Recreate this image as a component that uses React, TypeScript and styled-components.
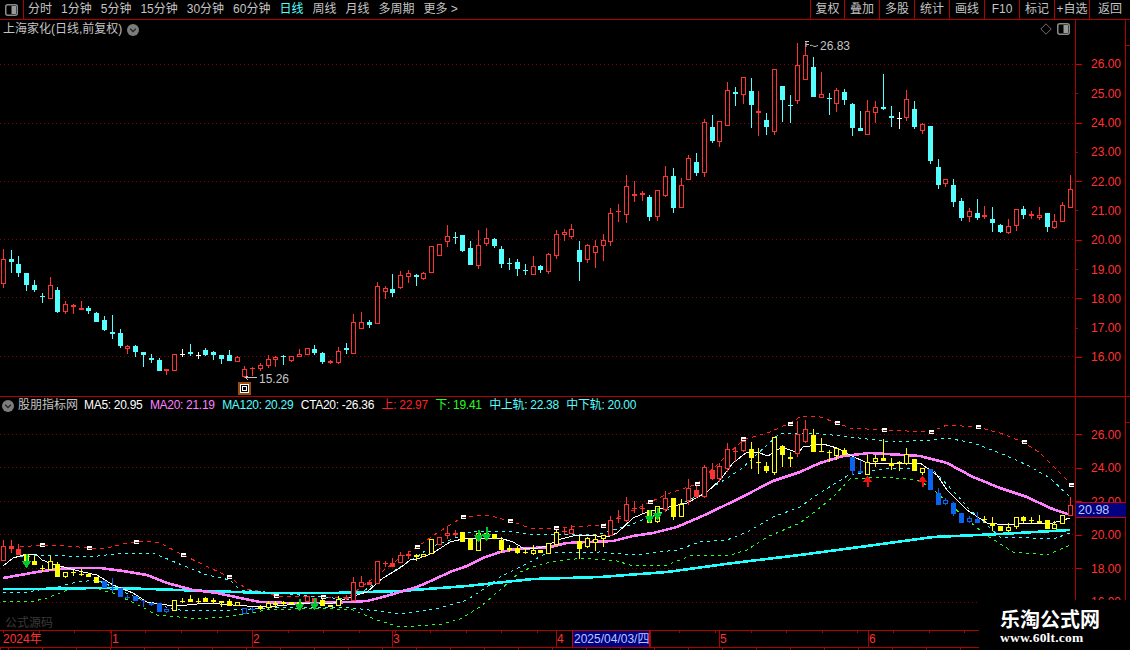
import React from "react";
import styled, { createGlobalStyle } from "styled-components";

const UI_FONT = '"Liberation Sans", "Noto Sans CJK SC", sans-serif';
const LINE = "#b00000";
const RED = "#ff3232";
const CYAN = "#54ffff";
const GREY = "#c4c4c4";

const Global = createGlobalStyle`
  html, body { margin: 0; padding: 0; background: #000; }
  body { font-family: ${UI_FONT}; font-size: 12px; color: ${GREY}; }
`;

const Screen = styled.div`
  position: relative;
  width: 1130px;
  height: 650px;
  overflow: hidden;
  background: #000;
  display: flex;
  flex-direction: column;
`;

/* ---------- toolbar ---------- */
const Toolbar = styled.div`
  height: 19px;
  flex: none;
  display: flex;
  align-items: stretch;
  border-bottom: 1px solid ${LINE};
`;
const IconCell = styled.div`
  width: 23px;
  flex: none;
  display: flex;
  align-items: center;
  justify-content: center;
  border-right: 1px solid ${LINE};
`;
const PeriodList = styled.div`
  display: flex;
  align-items: center;
  gap: 9px;
  padding-left: 4px;
`;
const Period = styled.span<{ $on?: boolean }>`
  color: ${(p) => (p.$on ? CYAN : GREY)};
  white-space: nowrap;
  line-height: 19px;
`;
const ActionList = styled.div`
  margin-left: auto;
  display: flex;
`;
const Action = styled.div<{ $w: number }>`
  width: ${(p) => p.$w}px;
  box-sizing: border-box;
  border-left: 1px solid ${LINE};
  text-align: center;
  line-height: 19px;
  white-space: nowrap;
  color: ${GREY};
`;

/* ---------- panes ---------- */
const Pane = styled.div<{ $h: number }>`
  position: relative;
  height: ${(p) => p.$h}px;
  flex: none;
  display: flex;
  border-bottom: 1px solid ${LINE};
`;
const Plot = styled.svg`
  display: block;
  flex: none;
  width: 1075px;
  height: 100%;
`;
const Scale = styled.div<{ $top: number }>`
  width: 51px;
  flex: none;
  box-sizing: border-box;
  border-left: 1px solid ${LINE};
  border-right: 1px solid ${LINE};
  padding-top: ${(p) => p.$top}px;
  overflow: hidden;
`;
const ScaleRow = styled.div<{ $h: number; $short?: boolean }>`
  height: ${(p) => p.$h}px;
  display: flex;
  align-items: center;
  color: ${RED};
  &::before {
    content: "";
    display: block;
    flex: none;
    width: ${(p) => (p.$short ? 2 : 6)}px;
    margin-right: ${(p) => (p.$short ? 13 : 9)}px;
    height: 1px;
    background: ${(p) => (p.$short ? LINE : "#d00000")};
  }
`;
const ScaleStub = styled.div`
  flex: 1;
  border-top: 1px solid ${LINE};
  margin-top: 25px;
  height: 0;
`;

const StockTitle = styled.div`
  position: absolute;
  left: 3px;
  top: 2px;
  display: flex;
  align-items: center;
  gap: 5px;
  line-height: 15px;
  white-space: nowrap;
`;
const CornerTools = styled.div`
  position: absolute;
  left: 1040px;
  top: 3px;
  display: flex;
  align-items: center;
  gap: 5px;
`;
const Legend = styled.div`
  position: absolute;
  left: 2px;
  top: 1px;
  display: flex;
  align-items: center;
  line-height: 15px;
  white-space: nowrap;
`;
const LegendName = styled.span`
  margin: 0 6px 0 4px;
  color: ${GREY};
`;
const LegendItem = styled.span<{ $c: string }>`
  color: ${(p) => p.$c};
  margin-right: 7.5px;
  letter-spacing: -0.3px;
`;
const LastPrice = styled.div`
  position: absolute;
  left: 1076px;
  top: 105px;
  width: 50px;
  height: 16px;
  box-sizing: border-box;
  background: #000080;
  border-top: 1px solid #d00000;
  border-bottom: 1px solid #d00000;
  padding-left: 2px;
  color: #b8c8ff;
  font-size: 12.5px;
  line-height: 14px;
`;
const DimMark = styled.div`
  position: absolute;
  left: 5px;
  bottom: -1px;
  color: #3a3a3a;
  line-height: 15px;
`;

/* ---------- time axis ---------- */
const TimeAxis = styled.div`
  height: 16px;
  flex: none;
  display: flex;
  background: repeating-linear-gradient(90deg, ${LINE} 0 1px, transparent 1px 35.6px) 3px 0 / 100% 2px no-repeat;
`;
const TimeCell = styled.div<{ $w: number }>`
  width: ${(p) => p.$w}px;
  flex: none;
  box-sizing: border-box;
  border-left: 1px solid ${LINE};
  padding-left: 0;
  color: ${RED};
  line-height: 16px;
  white-space: nowrap;
  &:first-child { border-left: 0; padding-left: 3px; }
`;
const TimeCursor = styled.div`
  width: 78px;
  flex: none;
  box-sizing: border-box;
  border-left: 1px solid #d00000;
  border-right: 1px solid #d00000;
  background: #000080;
  color: #b8c8ff;
  line-height: 16px;
  white-space: nowrap;
  padding-left: 1px;
`;
const TickStrip = styled.div`
  flex: 1;
  border-top: 1px solid ${LINE};
  background: repeating-linear-gradient(90deg, ${LINE} 0 1px, transparent 1px 34px) 8px 0;
`;

/* ---------- watermark ---------- */
const Watermark = styled.div`
  position: absolute;
  left: 979px;
  top: 600px;
  width: 151px;
  height: 50px;
  background: #000;
  display: flex;
  flex-direction: column;
  padding: 8px 0 0 21px;
  box-sizing: border-box;
  color: #fff;
`;
const WatermarkTitle = styled.div`
  font-family: "Noto Sans CJK SC", "Liberation Serif", serif;
  font-weight: 700;
  font-size: 20px;
  line-height: 22px;
  white-space: nowrap;
`;
const WatermarkUrl = styled.div`
  font-family: "Liberation Serif", serif;
  font-weight: 700;
  font-size: 13.5px;
  line-height: 16px;
  letter-spacing: 0.2px;
  white-space: nowrap;
`;

/* ---------- chart text ---------- */
const Note = styled.text`
  font-family: ${UI_FONT};
  font-size: 12px;
  fill: ${GREY};
`;

/* ---------- data ---------- */
type Row = [number, number, number, number, string];
type Candle = { i: number; wt: number; bt: number; bb: number; wb: number; k: string };

const from = (start: number, off: number, rows: Row[]): Candle[] =>
  rows.map((r, n) => ({
    i: start + n,
    wt: off + r[0] / 3,
    bt: off + r[1] / 3,
    bb: off + r[2] / 3,
    wb: off + r[3] / 3,
    k: r[4],
  }));

const main: Candle[] = [
  ...from(0, 240, [
    [27,57,131,144,"R"],[30,57,66,99,"c"],[48,72,99,111,"c"],[99,99,135,152,"c"],[121,135,150,156,"c"],
    [159,169,171,189,"c"],[111,136,176,177,"R"],[141,150,216,219,"c"],[183,192,216,222,"R"],[192,194,201,222,"R"],
    [183,205,209,209,"r"],[198,204,213,222,"c"],[216,219,246,246,"c"],[228,240,270,273,"c"],[225,277,282,297,"c"],
    [267,279,318,324,"c"],[315,318,327,342,"R"],[315,318,336,351,"c"],[336,336,345,381,"c"],[342,354,359,369,"c"],
    [354,360,393,393,"c"],[387,388,394,405,"R"],[343,343,392,392,"R"],[327,342,345,351,"w"],[312,336,342,348,"c"],
    [336,346,348,357,"w"],[324,330,345,348,"c"],[333,336,345,360,"c"],[345,345,357,372,"c"],[330,345,363,363,"c"],
    [348,351,365,365,"R"],[378,388,411,414,"R"],[381,384,386,408,"r"],[369,375,387,393,"R"],[345,357,378,384,"R"],
    [348,351,359,381,"R"],[345,348,352,375,"c"],[348,349,363,366,"R"],[327,342,350,350,"R"],[324,324,345,345,"R"],
    [315,327,339,345,"c"],[336,339,366,372,"c"],[360,363,369,372,"r"],[321,333,369,372,"R"],[309,324,330,342,"c"],
  ]),
  ...from(45, 170, [
    [432,456,552,552,"R"],[426,457,477,477,"R"],[450,456,465,474,"c"],[336,348,461,461,"R"],[348,355,365,387,"R"],
    [312,357,369,381,"c"],[304,316,355,358,"R"],[300,310,320,339,"R"],[312,315,321,348,"c"],[306,309,327,330,"R"],
    [229,229,309,309,"R"],[223,223,257,258,"R"],[165,198,216,231,"R"],[186,201,204,222,"c"],[195,195,243,246,"c"],
    [213,234,285,285,"c"],[180,225,288,297,"R"],[174,204,222,228,"R"],[204,207,228,234,"c"],[228,237,282,294,"c"],
    [264,279,282,300,"c"],[267,276,297,318,"c"],[282,300,302,315,"c"],[258,288,315,315,"R"],[285,288,300,309,"c"],
    [249,252,306,312,"R"],[180,192,258,267,"R"],[177,186,195,213,"R"],[162,177,201,207,"R"],[213,240,276,333,"c"],
    [222,225,270,279,"R"],[210,228,249,294,"R"],[192,210,228,273,"R"],[114,129,216,228,"R"],[102,124,126,156,"r"],
    [15,48,135,159,"R"],[33,72,78,96,"r"],[63,69,75,93,"r"],[75,81,141,153,"c"],[60,60,141,153,"R"],
    [-12,18,78,81,"R"],[-6,18,114,129,"c"],[25,45,114,114,"R"],[-45,-36,30,30,"R"],
  ]),
  ...from(89, 30, [
    [369,396,429,438,"c"],[267,276,429,441,"R"],[255,291,333,339,"c"],[273,274,335,351,"R"],[156,181,287,287,"R"],
    [171,186,191,228,"c"],[141,142,196,222,"R"],[144,183,225,294,"c"],[183,244,250,318,"R"],[249,270,291,315,"c"],
    [118,118,305,315,"R"],[168,168,210,276,"c"],[195,225,228,279,"c"],[39,105,213,222,"R"],[39,75,150,150,"R"],
    [81,111,201,201,"c"],[126,193,203,203,"R"],[189,204,207,255,"c"],[174,181,221,246,"R"],[177,186,210,225,"c"],
    [220,222,294,318,"c"],[243,294,303,303,"c"],[210,243,315,315,"R"],[213,232,248,279,"R"],[132,231,237,240,"c"],
    [228,258,264,291,"c"],[246,264,267,297,"w"],[180,207,264,273,"R"],[213,237,291,297,"c"],[279,283,302,312,"R"],
    [288,288,393,402,"c"],[387,411,465,477,"c"],[447,448,462,471,"R"],[447,465,516,531,"c"],[504,513,564,573,"c"],
    [534,543,561,576,"R"],[507,549,564,570,"c"],[528,555,561,567,"r"],[531,567,579,606,"c"],[582,585,606,609,"c"],
    [567,588,609,612,"R"],[537,537,588,603,"R"],[528,537,555,567,"c"],[543,552,557,567,"r"],[531,555,564,570,"R"],
    [549,549,591,606,"c"],[552,573,594,597,"R"],[516,525,576,576,"R"],[435,477,534,534,"R"],
  ]),
];

const ind: Candle[] = [
  ...from(0, 530, [
    [30,48,92,92,"R"],[30,48,56,70,"r"],[42,57,75,75,"r"],[72,72,100,100,"y"],[78,93,105,105,"y"],
    [105,113,115,125,"y"],[78,93,119,120,"Y"],[97,102,141,141,"y"],[125,127,140,145,"Y"],[120,126,129,138,"y"],
    [118,131,136,138,"y"],[128,132,140,140,"y"],[140,140,158,158,"y"],[152,152,174,174,"b"],[145,173,176,185,"b"],
    [175,175,201,201,"b"],[196,200,203,208,"b"],[197,197,213,213,"b"],[210,210,213,232,"b"],[215,220,224,228,"b"],
    [220,220,245,245,"b"],[238,238,245,248,"B"],[210,210,242,242,"Y"],[205,212,215,220,"y"],[196,208,215,216,"y"],
    [205,212,215,222,"y"],[200,204,215,216,"y"],[205,211,215,222,"y"],[212,214,220,232,"y"],[208,214,228,228,"y"],
    [216,216,227,227,"Y"],[235,235,252,252,"B"],[232,236,239,250,"b"],[225,232,238,240,"Y"],[212,220,233,236,"Y"],
    [213,220,224,233,"y"],[214,217,221,228,"y"],[216,216,222,222,"Y"],[208,215,225,225,"y"],[199,199,215,215,"R"],
    [205,205,215,215,"r"],[195,210,228,228,"y"],[224,225,231,232,"y"],[198,208,227,228,"Y"],[195,202,208,210,"r"],
    [142,157,212,212,"R"],[138,156,171,172,"R"],[155,155,165,165,"r"],[93,93,161,161,"R"],[93,100,103,110,"r"],
    [85,100,110,110,"r"],
  ]),
  ...from(51, 500, [
    [157,165,190,190,"R"],[152,163,167,178,"r"],[162,165,172,182,"y"],[162,162,172,172,"Y"],[118,118,161,161,"Y"],
    [110,110,136,136,"R"],[78,100,107,116,"R"],[90,100,105,110,"r"],[96,96,125,125,"y"],[118,118,150,150,"y"],
    [90,100,152,152,"Y"],[82,100,118,122,"y"],[102,102,117,117,"y"],[112,120,150,160,"y"],[135,145,150,155,"y"],
    [138,145,160,163,"y"],[145,155,157,163,"y"],[135,150,163,165,"Y"],[150,150,160,160,"y"],[130,130,161,161,"Y"],
    [82,95,135,135,"Y"],[84,92,95,106,"r"],[75,88,101,101,"R"],[108,123,147,177,"y"],[110,115,140,143,"Y"],
    [102,118,128,152,"Y"],[105,105,116,140,"Y"],[48,60,107,108,"R"],[30,53,55,70,"r"],
  ]),
  ...from(80, 410, [
    [262,282,332,335,"R"],[274,295,298,310,"r"],[283,295,298,310,"r"],[300,300,340,340,"y"],[289,289,335,340,"Y"],
    [244,265,300,305,"R"],[265,265,320,330,"y"],[268,283,320,320,"Y"],[207,235,272,285,"R"],[218,241,262,265,"r"],
    [165,172,260,265,"R"],[160,180,207,210,"r"],[160,168,207,215,"R"],[100,118,178,185,"R"],[112,123,126,155,"r"],
    [80,93,124,125,"R"],[95,118,143,178,"y"],[114,155,158,193,"y"],[157,168,183,190,"y"],[80,82,189,195,"Y"],
    [105,108,135,170,"y"],[127,142,146,172,"y"],[33,72,133,140,"R"],[30,58,97,100,"R"],[58,75,127,127,"y"],
    [85,124,127,127,"y"],[120,126,129,157,"y"],[115,115,139,150,"Y"],[113,120,135,135,"y"],
  ]),
  ...from(109, 400, [
    [170,170,213,225,"b"],[180,213,218,218,"b"],[165,185,224,224,"Y"],[165,175,187,200,"Y"],[116,175,183,183,"y"],
    [175,190,197,210,"y"],[183,187,190,213,"y"],[145,163,193,195,"Y"],[178,178,213,213,"y"],[205,205,218,225,"Y"],
    [207,207,270,270,"b"],[265,280,315,316,"b"],[295,300,312,316,"B"],[305,310,342,348,"b"],[338,338,368,370,"b"],
    [348,355,365,370,"B"],[335,357,368,370,"b"],[348,358,361,368,"y"],[350,370,377,392,"y"],[378,378,392,392,"y"],
    [370,382,392,396,"Y"],[350,352,382,388,"Y"],[348,352,362,368,"y"],[352,360,363,372,"y"],[345,364,368,368,"y"],
    [360,360,386,386,"y"],[362,372,386,386,"Y"],[346,346,373,373,"Y"],[290,316,349,349,"R"],
  ]),
];

const COLORS: Record<string, string> = { r: RED, c: CYAN, w: "#ffffff", y: "#ffff00", b: "#0a64f0" };

const colX = (i: number) => Math.floor(3.3 + 7.79 * i);

const Candles = ({ data }: { data: Candle[] }) => (
  <g shapeRendering="crispEdges">
    {data.map((d) => {
      const x = colX(d.i);
      const color = COLORS[d.k.toLowerCase()];
      const top = Math.round(d.bt);
      const bot = Math.round(d.bb);
      const hollow = d.k !== d.k.toLowerCase() && bot - top >= 3;
      return (
        <g key={d.i}>
          <line x1={x + 0.5} x2={x + 0.5} y1={Math.round(d.wt)} y2={Math.round(d.wb)} stroke={color} />
          {hollow ? (
            <rect x={x - 1.5} y={top + 0.5} width={4} height={bot - top - 1} fill="#000" stroke={color} />
          ) : (
            <rect x={x - 2} y={top} width={5} height={Math.max(bot - top, 1)} fill={color} />
          )}
        </g>
      );
    })}
  </g>
);

const DottedGrid = ({ ys }: { ys: number[] }) => (
  <g>
    {ys.map((y) => (
      <line key={y} x1={0} x2={1075} y1={y + 0.5} y2={y + 0.5} stroke="#8c0000" strokeDasharray="1 3" shapeRendering="crispEdges" />
    ))}
  </g>
);

type Pt = [number, number];
const pts = (p: Pt[]) => p.map((q) => q.join(",")).join(" ");

const WHITE_LINE: Pt[] = [[3,566],[13,558],[27,554],[37,555],[42,560],[50,563],[67,568],[83,572],[97,575],[113,585],[133,593],[147,602],[167,605],[187,605],[207,603],[233,605],[247,606],[267,607],[287,605],[300,604],[333,603],[360,594],[367,592],[383,578],[400,568],[410,560],[417,559],[433,553],[450,542],[467,538],[500,538],[513,542],[523,548],[533,549],[547,546],[557,540],[573,536],[587,535],[607,537],[617,533],[633,518],[647,512],[687,503],[707,492],[720,480],[733,463],[747,452],[757,452],[768,456],[782,447],[798,453],[803,447],[823,444],[837,448],[850,455],[867,463],[900,463],[920,463],[937,475],[947,490],[967,510],[987,523],[1007,525],[1027,523],[1053,523],[1070,518]];
const PINK_LINE: Pt[] = [[3,578],[20,575],[37,572],[57,569],[77,568],[100,568],[123,571],[147,575],[167,583],[193,590],[217,593],[240,598],[260,602],[287,603],[317,603],[350,602],[367,601],[383,597],[400,592],[417,587],[433,580],[450,572],[467,566],[483,558],[500,552],[517,549],[533,548],[550,547],[567,543],[587,542],[613,541],[633,536],[653,533],[677,527],[707,514],[740,498],[773,481],[800,472],[820,463],[843,456],[870,453],[920,456],[947,463],[973,477],[1000,488],[1027,497],[1050,508],[1070,515]];
const TEAL_LINE: Pt[] = [[3,589],[33,589],[100,588],[150,589],[207,591],[267,593],[333,593],[400,591],[467,586],[533,579],[600,577],[667,572],[733,563],[800,555],[867,546],[933,537],[1000,534],[1070,530]];
const RED_BAND: Pt[] = [[20,547],[43,545],[67,546],[90,548],[107,548],[123,544],[143,541],[160,543],[183,555],[200,563],[227,576],[247,589],[263,592],[277,596],[323,597],[347,598],[400,558],[417,547],[437,533],[463,517],[487,515],[510,521],[533,529],[557,528],[603,525],[650,502],[670,493],[697,484],[743,440],[770,432],[790,423],[800,417],[817,416],[837,423],[850,428],[883,430],[930,432],[947,425],[977,427],[1000,433],[1023,442],[1040,453],[1057,470],[1070,483]];
const CYAN_UP: Pt[] = [[20,557],[43,555],[90,557],[123,553],[153,553],[177,563],[207,575],[230,580],[240,590],[277,593],[333,598],[350,600],[400,567],[417,557],[430,547],[450,540],[473,531],[513,532],[530,534],[600,534],[630,525],[667,510],[700,495],[740,470],[780,433],[813,433],[850,437],[893,442],[933,440],[947,438],[973,443],[1000,453],[1027,465],[1050,478],[1070,497]];
const CYAN_DOWN: Pt[] = [[3,593],[27,592],[57,587],[77,582],[97,580],[113,587],[137,598],[157,605],[180,610],[233,610],[267,608],[317,607],[353,608],[400,614],[440,608],[467,600],[487,587],[500,577],[530,562],[547,553],[600,552],[633,555],[677,550],[700,542],[727,540],[747,532],[773,517],[800,507],[817,495],[847,476],[887,468],[933,470],[957,495],[970,510],[987,525],[1000,537],[1033,538],[1053,539],[1070,533]];
const GREEN_BAND: Pt[] = [[3,601],[30,602],[47,598],[73,588],[97,589],[113,593],[140,606],[157,615],[200,619],[233,616],[267,610],[317,608],[353,610],[377,620],[400,627],[443,624],[460,619],[480,607],[500,590],[520,572],[530,568],[550,562],[583,558],[617,561],[633,566],[667,565],[693,555],[727,556],[747,550],[767,537],[800,523],[817,510],[833,497],[850,479],[883,477],[917,480],[930,487],[983,533],[1013,552],[1047,555],[1070,545]];

const MARKERS: Pt[] = [[42,545],[89,548],[136,542],[183,555],[229,577],[276,596],[323,597],[417,547],[463,517],[510,521],[556,528],[603,526],[650,502],[697,484],[743,439],[790,424],[837,423],[884,430],[931,432],[978,427],[1024,442],[1071,485]];

const DOWN_ARROWS: [number, number, number][] = [[3,554,568],[38,599,611],[40,598,610],[61,530,542],[62,527,541],[83,510,523],[84,508,520]];
const UP_ARROWS: [number, number, number][] = [[111,476,487],[118,476,487]];

const StockPlot = () => (
  <Plot viewBox="0 20 1075 376" preserveAspectRatio="none">
    <DottedGrid ys={[64, 123, 181, 239, 297, 356]} />
    <Candles data={main} />
    <path d="M806 41.5h-1M806 41v6M806 41.5h3M806 44.5h3M810 45.5c2 -1 3 1 5 1c1 0 2 -1 3 -1" fill="none" stroke={GREY} />
    <Note x={820} y={50}>26.83</Note>
    <path d="M245.5 377.5H257M245.5 377.5l3 -2M245.5 377.5l3 3" fill="none" stroke={GREY} shapeRendering="crispEdges" />
    <Note x={259} y={383}>15.26</Note>
    <g shapeRendering="crispEdges">
      <rect x={238} y={382} width={13} height={13} fill="#9a4c10" />
      <rect x={240.5} y={384.5} width={8} height={8} fill="#000" stroke="#fff" />
      <rect x={242.5} y={386.5} width={4} height={4} fill="#000" stroke="#fff" />
    </g>
  </Plot>
);

const IndicatorPlot = () => (
  <Plot viewBox="0 397 1075 233" preserveAspectRatio="none">
    <DottedGrid ys={[434, 467, 501, 534, 568, 602]} />
    <g fill="none" shapeRendering="crispEdges">
      <polyline points={pts(RED_BAND)} stroke="#ff2020" strokeDasharray="4 4" />
      <polyline points={pts(CYAN_UP)} stroke="#33ffff" strokeDasharray="3 4" />
      <polyline points={pts(CYAN_DOWN)} stroke="#33ffff" strokeDasharray="3 4" />
      <polyline points={pts(GREEN_BAND)} stroke="#22ff22" strokeDasharray="3 4" />
      <polyline points={pts(TEAL_LINE)} stroke="#22ffff" strokeWidth={2.6} />
      <polyline points={pts(PINK_LINE)} stroke="#ff80ff" strokeWidth={2.6} />
      <polyline points={pts(WHITE_LINE)} stroke="#fff" />
    </g>
    <Candles data={ind} />
    <g shapeRendering="crispEdges">
      {DOWN_ARROWS.map(([i, a, b]) => {
        const x = colX(i) + 0.5;
        return <path key={i} d={`M${x - 1} ${a}h2v${b - a - 7}h4l-5 7l-5 -7h4z`} fill="#00c832" />;
      })}
      {UP_ARROWS.map(([i, a, b]) => {
        const x = colX(i) + 0.5;
        return <path key={i} d={`M${x} ${a}l5 6h-4v${b - a - 6}h-2v${a - b + 6}h-4z`} fill="#f01010" />;
      })}
      {MARKERS.map(([x, y]) => (
        <g key={x}>
          <rect x={x - 2} y={y - 2} width={5} height={4} fill="#fff" />
          <rect x={x - 1} y={y} width={4} height={1} fill="#702020" />
        </g>
      ))}
    </g>
  </Plot>
);

const PanelIcon = () => (
  <svg width="13" height="12" viewBox="0 0 13 12">
    <rect x="0.75" y="0.75" width="11.5" height="10.5" rx="2" fill="none" stroke="#8c8c8c" strokeWidth="1.5" />
    <rect x="6.5" y="2" width="4.5" height="8" fill="#9a9a9a" />
  </svg>
);
const ChevronBadge = () => (
  <svg width="12" height="12" viewBox="0 0 12 12">
    <circle cx="6" cy="6" r="6" fill="#7c7c7c" />
    <path d="M3.2 4.8 6 7.6 8.8 4.8" fill="none" stroke="#222" strokeWidth="1.3" />
  </svg>
);
const DiamondIcon = () => (
  <svg width="12" height="12" viewBox="0 0 12 12">
    <path d="M6 .8 11.2 6 6 11.2.8 6z" fill="none" stroke="#6e6e6e" />
  </svg>
);

const PERIODS = ["分时", "1分钟", "5分钟", "15分钟", "30分钟", "60分钟", "日线", "周线", "月线", "多周期", "更多 >"];
const ACTIONS: [string, number][] = [["复权", 34], ["叠加", 35], ["多股", 35], ["统计", 35], ["画线", 35], ["F10", 35], ["标记", 35], ["+自选", 35], ["返回", 41]];
const MAIN_PRICES = ["26.00", "25.00", "24.00", "23.00", "22.00", "21.00", "20.00", "19.00", "18.00", "17.00", "16.00"];
const IND_PRICES = ["26.00", "24.00", "22.00", "20.00", "18.00", "16.00"];
const LEGEND: [string, string][] = [
  ["MA5: 20.95", "#ffffff"],
  ["MA20: 21.19", "#ff80ff"],
  ["MA120: 20.29", CYAN],
  ["CTA20: -26.36", "#ffffff"],
  ["上: 22.97", "#ff2020"],
  ["下: 19.41", "#22ff22"],
  ["中上轨: 22.38", CYAN],
  ["中下轨: 20.00", CYAN],
];

export default function App() {
  return (
    <Screen>
      <Global />
      <Toolbar>
        <IconCell>
          <PanelIcon />
        </IconCell>
        <PeriodList>
          {PERIODS.map((p) => (
            <Period key={p} $on={p === "日线"}>{p}</Period>
          ))}
        </PeriodList>
        <ActionList>
          {ACTIONS.map(([label, w]) => (
            <Action key={label} $w={w}>{label}</Action>
          ))}
        </ActionList>
      </Toolbar>

      <Pane $h={376}>
        <StockPlot />
        <Scale $top={29.8}>
          {MAIN_PRICES.map((p, n) => (
            <ScaleRow key={p} $h={29.3} $short={n % 2 === 1}>{p}</ScaleRow>
          ))}
        </Scale>
        <ScaleStub />
        <StockTitle>
          上海家化(日线,前复权) <ChevronBadge />
        </StockTitle>
        <CornerTools>
          <DiamondIcon />
          <PanelIcon />
        </CornerTools>
      </Pane>

      <Pane $h={233}>
        <IndicatorPlot />
        <Scale $top={20.8}>
          {IND_PRICES.map((p) => (
            <ScaleRow key={p} $h={33.5}>{p}</ScaleRow>
          ))}
        </Scale>
        <ScaleStub />
        <Legend>
          <ChevronBadge />
          <LegendName>股朋指标网</LegendName>
          {LEGEND.map(([text, color]) => (
            <LegendItem key={text} $c={color}>{text}</LegendItem>
          ))}
        </Legend>
        <LastPrice>20.98</LastPrice>
        <DimMark>公式源码</DimMark>
      </Pane>

      <TimeAxis>
        <TimeCell $w={111}>2024年</TimeCell>
        <TimeCell $w={141}>1</TimeCell>
        <TimeCell $w={140}>2</TimeCell>
        <TimeCell $w={164}>3</TimeCell>
        <TimeCell $w={16}>4</TimeCell>
        <TimeCursor>2025/04/03/四</TimeCursor>
        <TimeCell $w={69}></TimeCell>
        <TimeCell $w={149}>5</TimeCell>
        <TimeCell $w={110}>6</TimeCell>
      </TimeAxis>
      <TickStrip />

      <Watermark>
        <WatermarkTitle>乐淘公式网</WatermarkTitle>
        <WatermarkUrl>www.60lt.com</WatermarkUrl>
      </Watermark>
    </Screen>
  );
}
